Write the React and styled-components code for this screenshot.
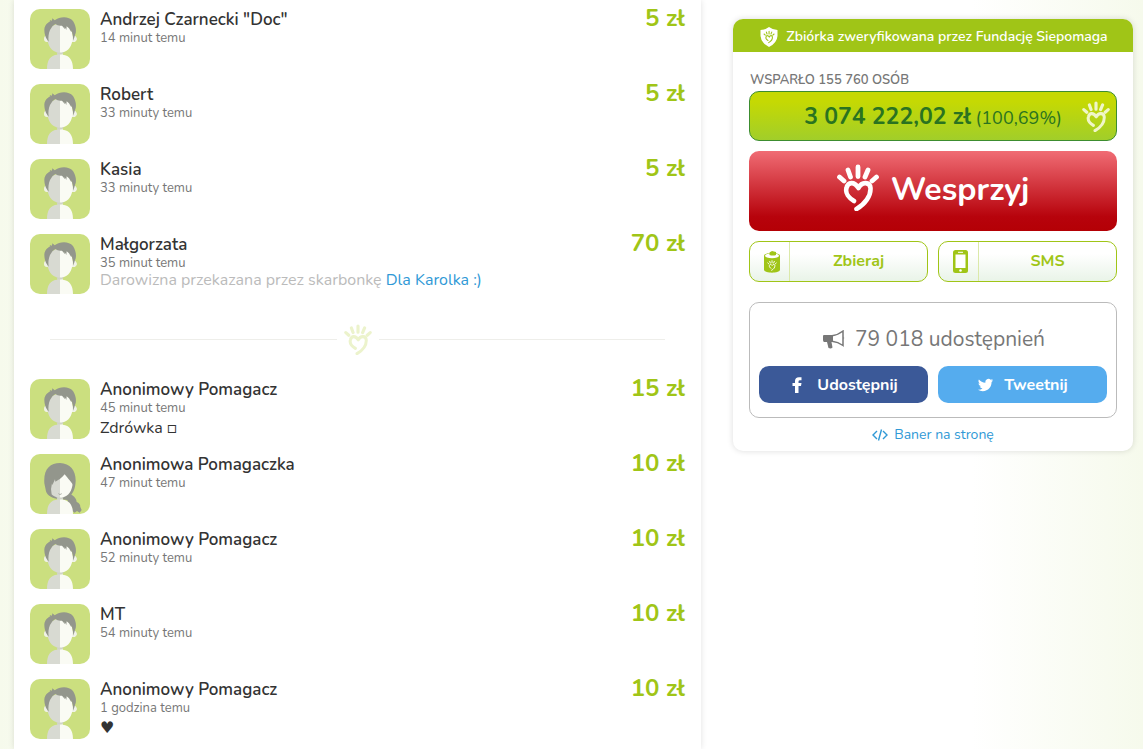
import React from "react";
import styled, { createGlobalStyle } from "styled-components";

const GlobalStyle = createGlobalStyle`
  *, *::before, *::after { box-sizing: border-box; }
  body {
    margin: 0;
    min-height: 100vh;
    overflow: hidden;
    color: #333;
    font-family: Nunito, Lato, "Open Sans", "DejaVu Sans", sans-serif;
    background: linear-gradient(90deg, #f6faec 0, #ffffff 15%, #ffffff 85%, #f6faec 100%);
  }
  button { font-family: inherit; cursor: pointer; }
  a { color: #3099d6; text-decoration: none; }
`;

const Page = styled.div`
  display: grid;
  grid-template-columns: minmax(0, 1fr) 400px;
  gap: 32px;
  padding: 0 10px 0 14px;
  height: 100vh;
`;

const DonationPanel = styled.main`
  height: 100%;
  overflow: hidden;
  padding: 9px 16px;
  background: #fff;
  box-shadow: 0 0 6px rgba(0, 0, 0, 0.12);
`;

const DonationList = styled.ul`
  display: flex;
  flex-direction: column;
  gap: 15px;
  margin: 0;
  padding: 0;
  list-style: none;
`;

const DonationRow = styled.li`
  display: flex;
  gap: 10px;
  height: 60px;
`;

const AvatarFrame = styled.svg`
  flex: none;
  width: 60px;
  height: 60px;
  border-radius: 10px;
  background: #cbdf7f;
`;

const Details = styled.div`
  flex: 1;
  min-width: 0;
  padding-top: 1px;
`;

const DonorName = styled.div`
  font-size: 17px;
  line-height: 20px;
  font-weight: 650;
`;

const DonationTime = styled.div`
  font-size: 13px;
  line-height: 16px;
  color: #777;
`;

const Comment = styled.div`
  font-size: 16px;
  line-height: 24px;
`;

const MoneyboxNote = styled.div`
  font-size: 16px;
  line-height: 18px;
  color: #bbb;
`;

const Amount = styled.div`
  color: #a0c517;
  font-size: 24px;
  line-height: 18px;
  font-weight: 700;
`;

const Separator = styled.li`
  display: flex;
  align-items: center;
  gap: 7px;
  height: 55px;
  padding: 5px 20px 0;
  color: #ecf3cc;

  &::before, &::after {
    content: "";
    flex: 1;
    height: 1px;
    background: #eeeeea;
  }
`;

const HandMark = styled.svg`
  flex: none;
  width: ${(p) => p.$width}px;
  height: ${(p) => p.$height}px;
  fill: none;
  stroke: currentColor;
  stroke-linecap: round;
  stroke-linejoin: round;
`;

const Sidebar = styled.aside`
  padding-top: 19px;
`;

const Card = styled.section`
  overflow: hidden;
  border-radius: 10px;
  background: #fff;
  box-shadow: 0 0 6px rgba(0, 0, 0, 0.14);
`;

const VerifiedBar = styled.header`
  display: flex;
  align-items: center;
  justify-content: center;
  gap: 8px;
  height: 33px;
  padding: 2px 0 0 2px;
  color: #fff;
  background: #a0c517;
  font-size: 14px;
  font-weight: 650;
`;

const CardBody = styled.div`
  display: flex;
  flex-direction: column;
  gap: 10px;
  padding: 18px 16px 6px;
`;

const Supporters = styled.div`
  margin-bottom: -9px;
  padding-left: 1px;
  font-size: 13px;
  line-height: 20px;
  font-weight: 600;
  color: #777;
  text-transform: uppercase;
`;

const Progress = styled.div`
  display: flex;
  align-items: center;
  height: 50px;
  padding-right: 6px;
  border: 1px solid #3c8d2f;
  border-radius: 10px;
  color: #f0f6c8;
  background: linear-gradient(#c5d903 20%, #a1ce2a);
`;

const ProgressText = styled.div`
  flex: 1;
  padding-left: 34px;
  text-align: center;
  color: #2a7320;
  font-size: 18px;
  white-space: nowrap;
`;

const Total = styled.strong`
  font-size: 23px;
  font-weight: 700;
`;

const SupportButton = styled.button`
  display: flex;
  align-items: center;
  justify-content: center;
  gap: 12px;
  height: 80px;
  padding: 0 0 4px;
  border: 0;
  border-radius: 10px;
  color: #fff;
  background: linear-gradient(#f06c74 0%, #b7030c 82%, #b40005 100%);
  font-size: 32px;
  font-weight: 700;

  svg { margin-bottom: 4px; }
`;

const ButtonPair = styled.div`
  display: grid;
  grid-template-columns: 1fr 1fr;
  gap: 10px;
`;

const OptionButton = styled.button`
  display: flex;
  align-items: stretch;
  height: 41px;
  padding: 0;
  border: 1px solid #a0c517;
  border-radius: 10px;
  color: #a0c517;
  background: linear-gradient(#fff 30%, #e9f4e8);
  font-size: 16px;
  line-height: 38px;
  font-weight: 700;
`;

const OptionIcon = styled.span`
  display: flex;
  align-items: center;
  justify-content: center;
  width: 40px;
  padding-left: 4px;
  border-right: 1px solid #dbe9a9;
`;

const OptionLabel = styled.span`
  flex: 1;
`;

const ShareBox = styled.div`
  height: 116px;
  margin-top: 10px;
  padding: 22px 9px 14px;
  border: 1px solid #bbb;
  border-radius: 10px;
`;

const ShareCount = styled.div`
  display: flex;
  align-items: center;
  justify-content: center;
  gap: 10px;
  height: 28px;
  margin-bottom: 13px;
  padding-left: 2px;
  color: #777;
  font-size: 21px;
`;

const ShareButton = styled.button`
  display: flex;
  align-items: center;
  justify-content: center;
  gap: 10px;
  height: 37px;
  padding: 0;
  border: 0;
  border-radius: 10px;
  color: #fff;
  background: ${(p) => p.$color};
  font-size: 16px;
  font-weight: 750;
`;

const BannerLink = styled.a`
  display: flex;
  align-items: center;
  justify-content: center;
  gap: 6px;
  margin-top: -3px;
  font-size: 14px;
  line-height: 20px;
`;

const FINGERS = "M2.5 13 7 17M11 6l2.5 7M21 3v9.5M31 6l-3 7M39.5 13 35 17";
const HEART = "M17 37C12 34 8 29 9.500 24C11 18 17 17 21.500 24C25 17 33 18 33.500 24C34 32 28 40 19.500 45";

function Hand({ width, height }) {
  return (
    <HandMark $width={width} $height={height} viewBox="0 0 42 47" aria-hidden="true">
      <path d={FINGERS} strokeWidth="4.8" />
      <path d={HEART} strokeWidth="4.6" />
    </HandMark>
  );
}

function Avatar({ woman }) {
  return (
    <AvatarFrame viewBox="0 0 180 180" aria-hidden="true">
      {woman && (
        <path
          d="M43 88C40 45 60 27 90 27C121 28 138 50 137 82C136 101 132 112 124 122C132 126 140 135 140 144Q151 148 151 159L155 168L149 176L141 171L134 176L126 170L127 161L118 156L112 138L80 134C61 130 48 120 47 107Z"
          fill="#93968c"
        />
      )}
      {!woman && (
        <path d="M53 80Q42 78 42 91Q43 101 54 99ZM127 80Q138 78 141 90Q139 101 126 99Z" fill="#f0f2e8" />
      )}
      <path d="M90 45C64 44 51 64 52 86C53 110 65 127 82 130V137C61 138 51 154 51 180H90Z" fill="#d8dad2" />
      <path d="M90 45C115 44 129 64 128 86C127 110 115 127 98 130V137C119 139 129 154 129 180H90Z" fill="#fafbf4" />
      <path d="M79 129Q90 132 101 129L98 135Q90 138 82 135Z" fill="#d0d3c8" />
      {woman ? (
        <>
          <path d="M48 98C45 55 59 35 91 34C120 37 137 56 133 98C127 88 113 72 104 61C95 72 86 78 76 83L75 76L67 94L66 88Q61 104 65 122Q50 112 48 98Z" fill="#93968c" />
          <path d="M83 118Q90 122 97 118Q91 125 83 118Z" fill="#73776e" />
        </>
      ) : (
        <path
          d="M56 98C45 86 43 72 43 61C45 47 53 41 61 37L59 33L66 35L67 28L74 34C91 21 117 22 129 36C139 51 140 70 135 78L130 95C129 81 128 72 123 64L124 70L117 58L110 52L109 63L104 54L105 61L96 50Q84 52 76 45Q65 50 60 63C56 73 54 85 56 98Z"
          fill="#93968c"
        />
      )}
    </AvatarFrame>
  );
}

function ShieldIcon() {
  return (
    <svg width="18" height="20" viewBox="0 0 18 20" aria-hidden="true">
      <path d="M9 0Q13 3 17.500 3V9Q17 16 9 20Q1 16 .5 9V3Q5 3 9 0Z" fill="#fff" />
      <g transform="translate(3.400 3.500) scale(.27)" fill="none" stroke="#a0c517" strokeLinecap="round">
        <path d={FINGERS} strokeWidth="4" />
        <path d={HEART} strokeWidth="4" />
      </g>
    </svg>
  );
}

function MoneyboxIcon() {
  return (
    <svg width="16" height="22" viewBox="0 0 16 22" aria-hidden="true">
      <path d="M0 4.500C0 1 16 1 16 4.500V19C15 22.500 1 22.500 0 19Z" fill="#a0c517" />
      <ellipse cx="8" cy="4.700" rx="7" ry="2.500" fill="#fff" />
      <path d="M5.500 4V1.500L8 0l4 1v3Q9 5 5.500 4Z" fill="#a0c517" />
      <g transform="translate(3.200 9) scale(.23)" fill="none" stroke="#fff" strokeLinecap="round">
        <path d={FINGERS} strokeWidth="4" />
        <path d={HEART} strokeWidth="4" />
      </g>
    </svg>
  );
}

function PhoneIcon() {
  return (
    <svg width="15" height="23" viewBox="0 0 15 23" aria-hidden="true">
      <rect width="15" height="23" rx="2.500" fill="#a0c517" />
      <path d="M2.500 4.500h10v13.500h-10Z" fill="#fff" />
      <path d="M5 2.300h5" stroke="#fff" />
      <circle cx="7.500" cy="20.500" r="1.300" fill="#fff" />
    </svg>
  );
}

function MegaphoneIcon() {
  return (
    <svg width="22" height="19" viewBox="0 0 22 19" aria-hidden="true">
      <path d="M1 5H10V12H8.500L9.500 17.500Q8 19 5.500 18L4 12H1Q0 11.500 0 10V6Q0 5 1 5Z" fill="#777" />
      <path d="M9 5.800Q15 5 20 1V15.500Q15 12 9 11.300" fill="none" stroke="#777" strokeWidth="1.500" />
      <path d="M20.500 6.500Q22 8 20.500 9.500Z" fill="#777" />
    </svg>
  );
}

function FacebookIcon() {
  return (
    <svg width="18" height="16" viewBox="0 0 18 16" aria-hidden="true">
      <path d="M6 16V9H3.500V6H6V4Q6 .2 10 .2H12.500V3.200H11Q9.500 3.200 9.500 4.500V6H12.500L12 9H9.500V16Z" fill="#fff" />
    </svg>
  );
}

function TwitterIcon() {
  return (
    <svg width="17" height="14" viewBox="0 1 24 22" aria-hidden="true">
      <path d="M23.953 4.570a10 10 0 01-2.825.775 4.958 4.958 0 002.163-2.723c-.951.555-2.005.959-3.127 1.184a4.920 4.920 0 00-8.384 4.482C7.690 8.095 4.067 6.130 1.640 3.162a4.822 4.822 0 00-.666 2.475c0 1.710.870 3.213 2.188 4.096a4.904 4.904 0 01-2.228-.616v.060a4.923 4.923 0 003.946 4.827 4.996 4.996 0 01-2.212.085 4.936 4.936 0 004.604 3.417 9.867 9.867 0 01-6.102 2.105c-.390 0-.779-.023-1.170-.067a13.995 13.995 0 007.557 2.209c9.053 0 13.998-7.496 13.998-13.985 0-.210 0-.420-.015-.630A9.935 9.935 0 0024 4.590z" fill="#fff" />
    </svg>
  );
}

function CodeIcon() {
  return (
    <svg width="16" height="12" viewBox="0 0 16 12" fill="none" stroke="#3099d6" strokeWidth="1.400" aria-hidden="true">
      <path d="M5 2 1 6l4 4M11 2l4 4-4 4M9.500 .5l-3 11" />
    </svg>
  );
}

function Donation({ name, time, amount, comment, moneybox, woman }) {
  return (
    <DonationRow>
      <Avatar woman={woman} />
      <Details>
        <DonorName>{name}</DonorName>
        <DonationTime>{time}</DonationTime>
        {comment && <Comment>{comment}</Comment>}
        {moneybox && (
          <MoneyboxNote>
            Darowizna przekazana przez skarbonkę <a href="#skarbonka">{moneybox}</a>
          </MoneyboxNote>
        )}
      </Details>
      <Amount>{amount} zł</Amount>
    </DonationRow>
  );
}

const recent = [
  { name: 'Andrzej Czarnecki "Doc"', time: "14 minut temu", amount: 5 },
  { name: "Robert", time: "33 minuty temu", amount: 5 },
  { name: "Kasia", time: "33 minuty temu", amount: 5 },
  { name: "Małgorzata", time: "35 minut temu", amount: 70, moneybox: "Dla Karolka :)" },
];

const earlier = [
  { name: "Anonimowy Pomagacz", time: "45 minut temu", amount: 15, comment: "Zdrówka □" },
  { name: "Anonimowa Pomagaczka", time: "47 minut temu", amount: 10, woman: true },
  { name: "Anonimowy Pomagacz", time: "52 minuty temu", amount: 10 },
  { name: "MT", time: "54 minuty temu", amount: 10 },
  { name: "Anonimowy Pomagacz", time: "1 godzina temu", amount: 10, comment: "♥" },
];

export default function App() {
  return (
    <>
      <GlobalStyle />
      <Page>
        <DonationPanel>
          <DonationList>
            {recent.map((d) => <Donation key={d.name} {...d} />)}
            <Separator><Hand width={28} height={31} /></Separator>
            {earlier.map((d) => <Donation key={d.time} {...d} />)}
          </DonationList>
        </DonationPanel>
        <Sidebar>
          <Card>
            <VerifiedBar><ShieldIcon />Zbiórka zweryfikowana przez Fundację Siepomaga</VerifiedBar>
            <CardBody>
              <Supporters>Wsparło 155 760 osób</Supporters>
              <Progress>
                <ProgressText><Total>3 074 222,02 zł</Total> (100,69%)</ProgressText>
                <Hand width={28} height={31} />
              </Progress>
              <SupportButton><Hand width={42} height={47} />Wesprzyj</SupportButton>
              <ButtonPair>
                <OptionButton><OptionIcon><MoneyboxIcon /></OptionIcon><OptionLabel>Zbieraj</OptionLabel></OptionButton>
                <OptionButton><OptionIcon><PhoneIcon /></OptionIcon><OptionLabel>SMS</OptionLabel></OptionButton>
              </ButtonPair>
              <ShareBox>
                <ShareCount><MegaphoneIcon />79 018 udostępnień</ShareCount>
                <ButtonPair>
                  <ShareButton $color="#3b5998"><FacebookIcon />Udostępnij</ShareButton>
                  <ShareButton $color="#55acee"><TwitterIcon />Tweetnij</ShareButton>
                </ButtonPair>
              </ShareBox>
              <BannerLink href="#baner"><CodeIcon />Baner na stronę</BannerLink>
            </CardBody>
          </Card>
        </Sidebar>
      </Page>
    </>
  );
}
